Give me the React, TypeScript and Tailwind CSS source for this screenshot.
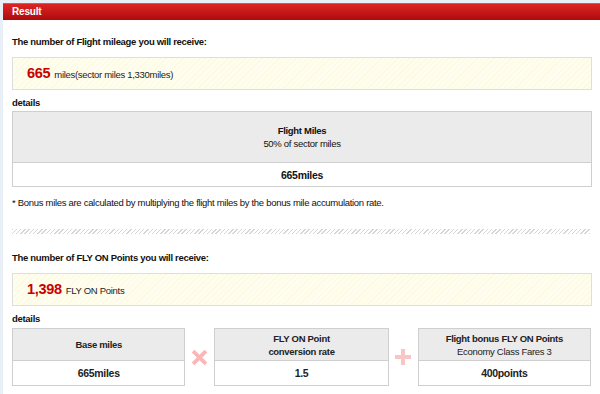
const hatch =
  "bg-[repeating-linear-gradient(135deg,#d6d6d6_0px,#d6d6d6_1px,#ffffff_1px,#ffffff_3px)]";

function Summary({ value, unit }: { value: string; unit: string }) {
  return (
    <div className="h-[33px] border border-[#dedede] bg-[#fefdea] bg-[repeating-linear-gradient(135deg,#fcfbe2_0px,#fcfbe2_1px,#fefdee_1px,#fefdee_4px)] flex items-center pl-[14px]">
      <span className="text-[14.5px] leading-none font-bold text-[#c80000] tracking-[-0.3px]">{value}</span>
      <span className="ml-[4px] text-[9.5px] leading-none text-[#222] pt-[2px] tracking-[-0.3px]">{unit}</span>
    </div>
  );
}

function Box({
  title,
  sub,
  value,
  width,
}: {
  title: string[];
  sub?: string;
  value: string;
  width: string;
}) {
  return (
    <div className={`${width} border border-[#cfcfcf] text-center text-[9.5px] leading-[13px] text-[#222]`}>
      <div className="h-[32px] bg-[#ebebeb] border-b border-[#cfcfcf] flex flex-col justify-center">
        {title.map((t) => (
          <div key={t} className="font-bold">
            {t}
          </div>
        ))}
        {sub && <div>{sub}</div>}
      </div>
      <div className="h-[24px] flex items-center justify-center font-bold text-[10.5px]">{value}</div>
    </div>
  );
}

export default function App() {
  return (
    <div
      className="w-[600px] h-[394px] bg-[#e8eff7] pl-[3px] pt-[3px] overflow-hidden"
      style={{ fontFamily: '"Liberation Sans", Arial, sans-serif' }}
    >
      <div className="h-full bg-white">
        {/* header */}
        <div className="h-[17px] bg-gradient-to-b from-[#dd2424] to-[#ae0a0a] border-t border-[#e85050] flex items-center pl-[9px]">
          <span className="text-white font-bold text-[10px] leading-none tracking-[-0.2px]">Result</span>
        </div>

        <div className="px-[9px] text-[9.5px] leading-[14px] tracking-[-0.3px] text-[#111]">
          <div className="mt-[15px] font-bold">The number of Flight mileage you will receive:</div>
          <div className="mt-[8px] w-[580px]">
            <Summary value="665" unit="miles(sector miles 1,330miles)" />
          </div>
          <div className="mt-[6px] font-bold">details</div>

          <div className="mt-[1px] w-[580px] border border-[#cfcfcf] text-center">
            <div className="h-[51px] bg-[#ebebeb] border-b border-[#cfcfcf] flex flex-col justify-center leading-[13px]">
              <div className="font-bold">Flight Miles</div>
              <div>50% of sector miles</div>
            </div>
            <div className="h-[23px] flex items-center justify-center font-bold text-[10.5px]">665miles</div>
          </div>

          <div className="mt-[9px]">
            * Bonus miles are calculated by multiplying the flight miles by the bonus mile accumulation rate.
          </div>

          <div className={`mt-[19px] h-[5px] w-[578px] ${hatch}`} />

          <div className="mt-[17px] font-bold">The number of FLY ON Points you will receive:</div>
          <div className="mt-[8px] w-[580px]">
            <Summary value="1,398" unit="FLY ON Points" />
          </div>
          <div className="mt-[6px] font-bold">details</div>

          <div className="mt-[2px] flex items-start">
            <Box width="w-[174px]" title={["Base miles"]} value="665miles" />
            <div className="w-[29px] h-[58px] flex items-center justify-center">
              <svg width="17" height="17" viewBox="0 0 16 16">
                <path d="M2 2L14 14M14 2L2 14" stroke="#f9b7b7" strokeWidth="3.5" />
              </svg>
            </div>
            <Box width="w-[175px]" title={["FLY ON Point", "conversion rate"]} value="1.5" />
            <div className="w-[29px] h-[58px] flex items-center justify-center">
              <svg width="18" height="18" viewBox="0 0 18 18">
                <path d="M9 1V17M1 9H17" stroke="#f9c6c6" strokeWidth="4" />
              </svg>
            </div>
            <Box
              width="w-[174px]"
              title={["Flight bonus FLY ON Points"]}
              sub="Economy Class Fares 3"
              value="400points"
            />
          </div>
        </div>
      </div>
    </div>
  );
}
